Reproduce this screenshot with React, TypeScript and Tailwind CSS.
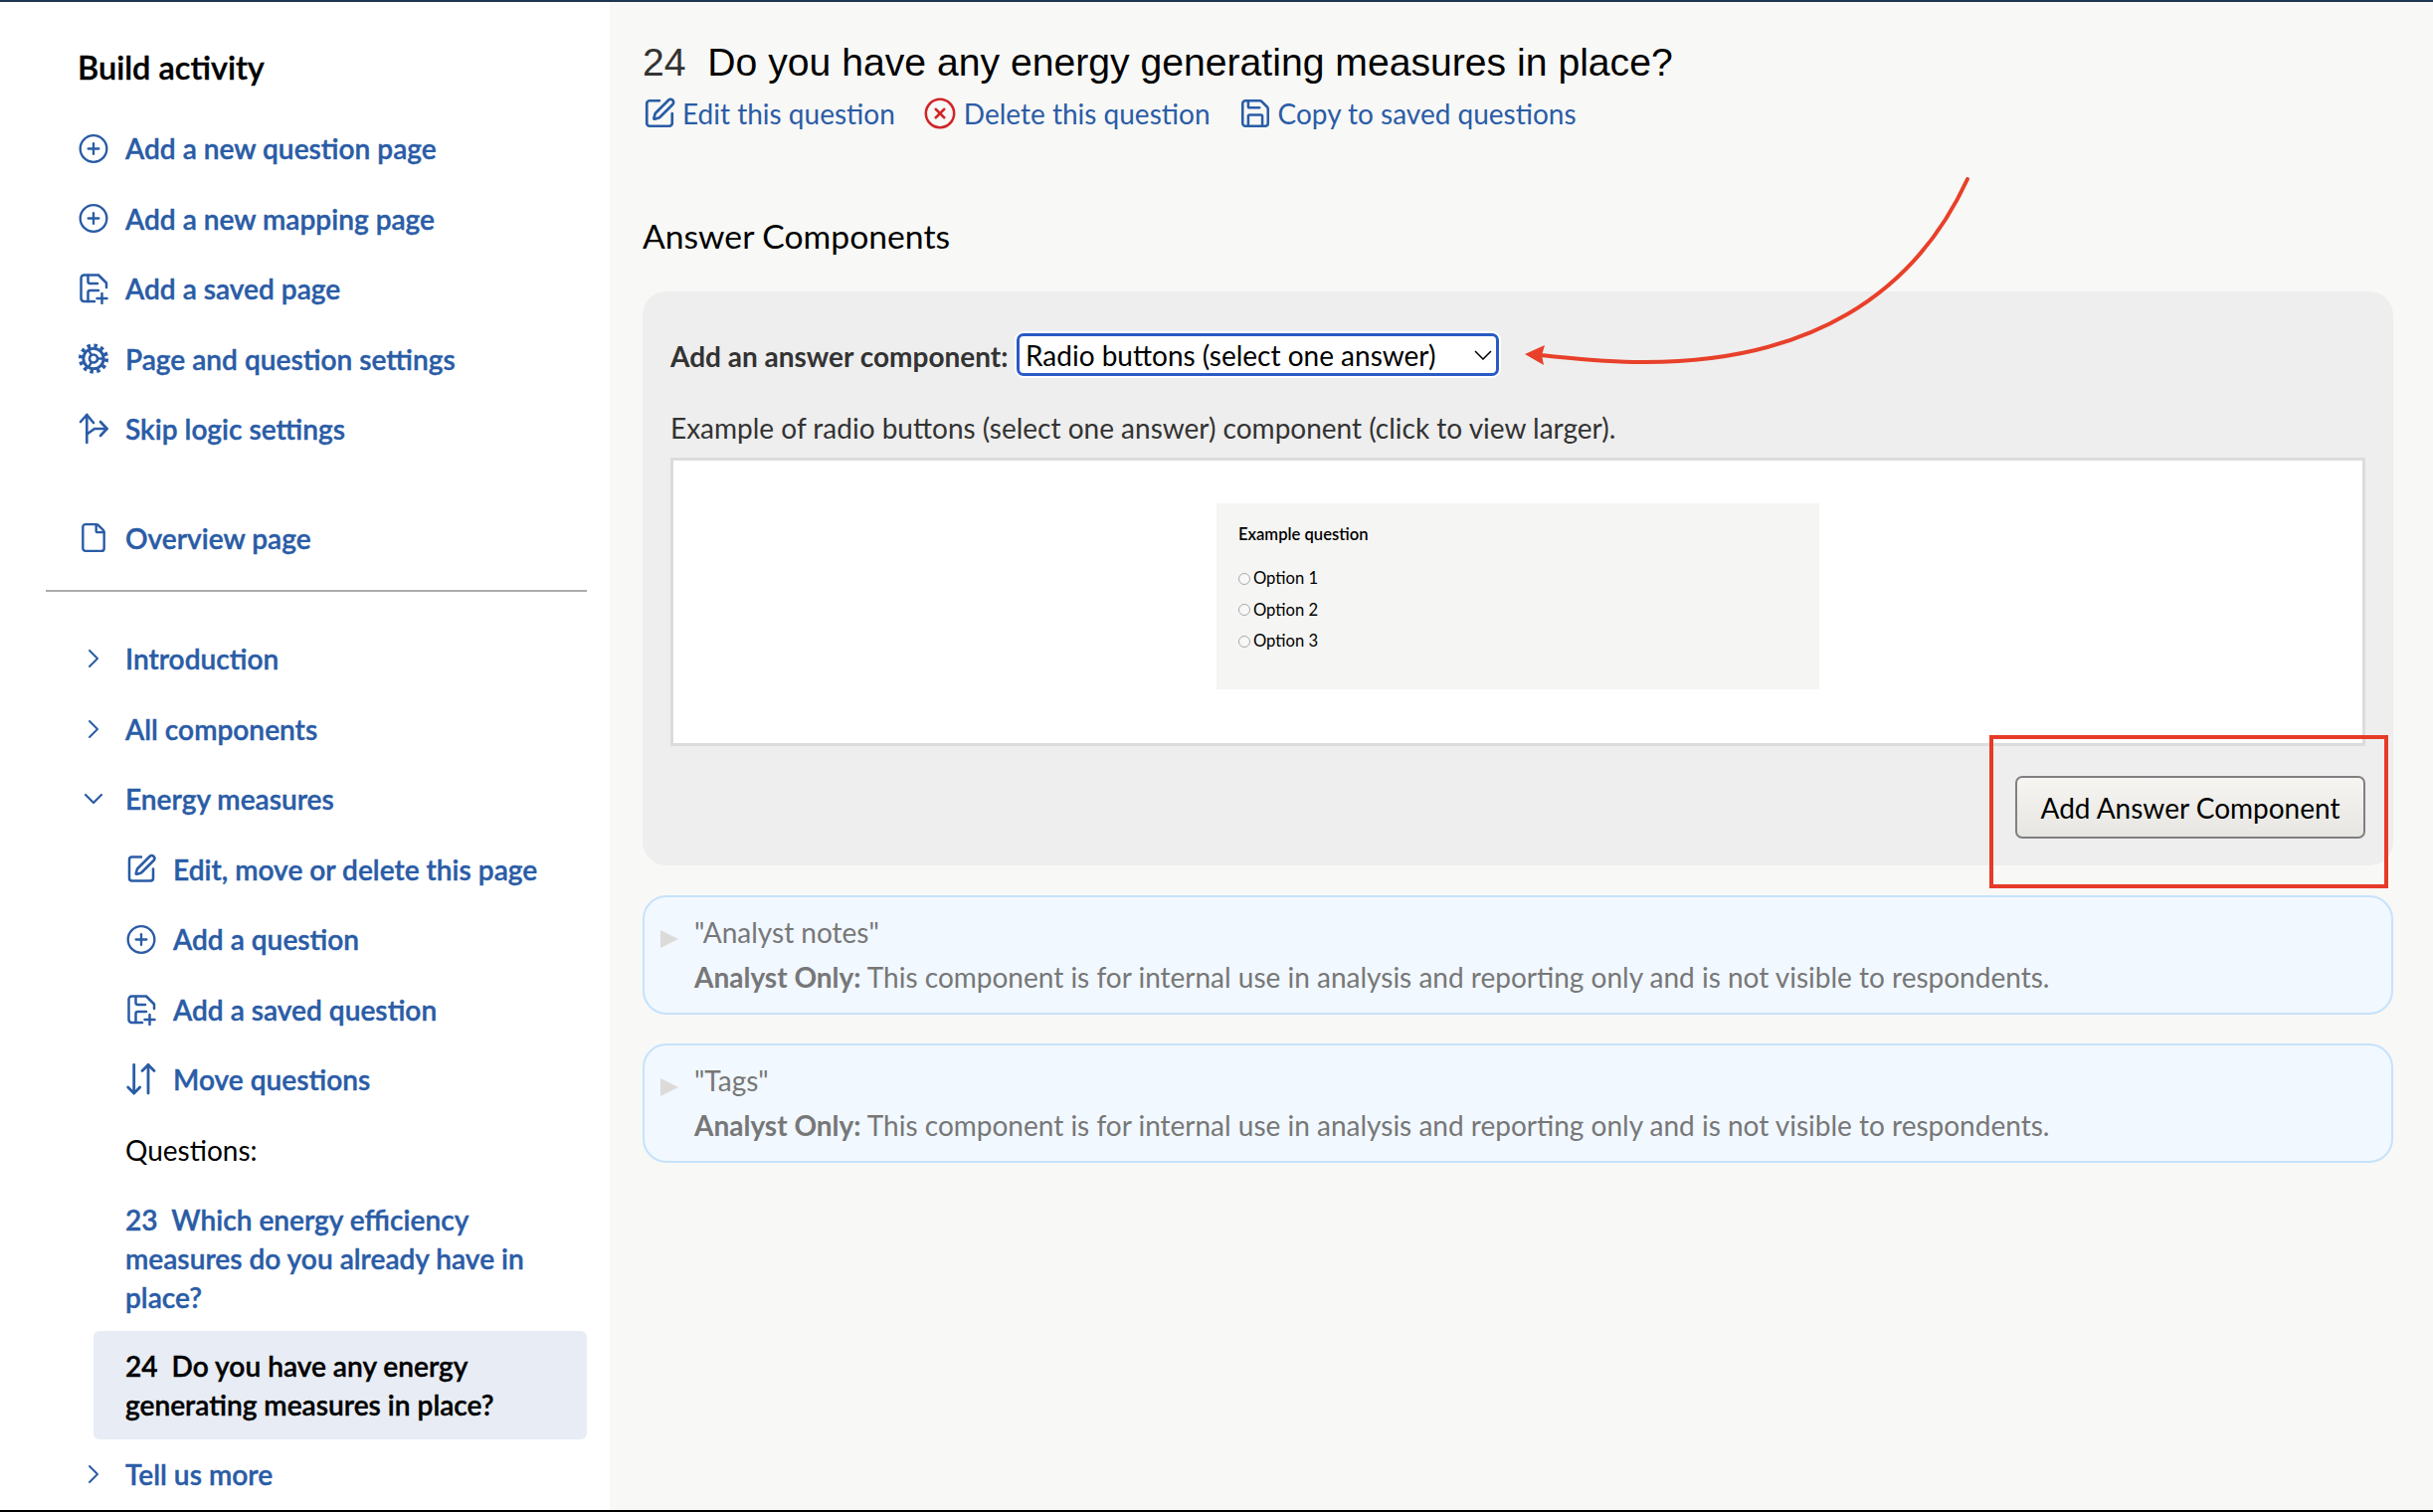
import { ChevronDown, ChevronRight, CirclePlus, CircleX, File, Save, SquarePen } from 'lucide-react'
import type { ReactNode } from 'react'

const LINK = 'text-[#2a5ca6]'

function SavedPlus() {
  return (
    <svg viewBox="0 0 32 32" fill="none" stroke="currentColor" strokeWidth="2.5" strokeLinecap="round" strokeLinejoin="round" className="h-[32px] w-[32px]">
      <path d="M17 29H6.5a3 3 0 0 1-3-3V5.5a3 3 0 0 1 3-3H21l8 8V15" />
      <path d="M10.5 3v6a2 2 0 0 0 2 2H20" />
      <path d="M10.5 29V20a2 2 0 0 1 2-2H21" />
      <path d="M24.5 21v10M19.5 26h10" />
    </svg>
  )
}

function Gear() {
  return (
    <svg viewBox="0 0 24 24" fill="none" stroke="currentColor" strokeLinecap="butt" className="h-[33px] w-[33px]">
      <circle cx="12" cy="12" r="7.6" strokeWidth="2.2" />
      <circle cx="12" cy="12" r="9.8" strokeWidth="3" strokeDasharray="2.6 2.53" />
      <circle cx="12" cy="12" r="3" strokeWidth="2" />
      <path d="M15 12h4M10.5 9.4 8.3 5.6M10.5 14.6l-2.2 3.8" strokeWidth="1.8" />
    </svg>
  )
}

function SkipLogic() {
  return (
    <svg viewBox="0 0 32 32" fill="none" stroke="currentColor" strokeWidth="2.6" strokeLinecap="round" strokeLinejoin="round" className="h-[32px] w-[32px]">
      <path d="M9.3 30V2" />
      <path d="M3 9l6.3-7L16 10" />
      <path d="M10 21l7-5h12.5" />
      <path d="M23 9l6.5 7L23 23" />
    </svg>
  )
}

function MoveArrows() {
  return (
    <svg viewBox="0 0 32 32" fill="none" stroke="currentColor" strokeWidth="2.8" strokeLinecap="round" strokeLinejoin="round" className="h-[32px] w-[32px]">
      <path d="M8.7 1.5V30" />
      <path d="M2.7 24l6 6 6-6" />
      <path d="M23 30V1.5" />
      <path d="M17 7.5l6-6 6 6" />
    </svg>
  )
}

function NavRow({ icon, label, indent }: { icon: ReactNode; label: string; indent?: boolean }) {
  return (
    <a className={`flex h-[70.5px] items-center ${LINK} ${indent ? 'pl-[126px]' : 'pl-[78px]'}`}>
      <span className="flex w-[32px] shrink-0 justify-center">{icon}</span>
      <span className="ml-[16px] text-[28.1px] font-semibold whitespace-nowrap [-webkit-text-stroke:0.4px]">{label}</span>
    </a>
  )
}

function AnalystCard({ title }: { title: string }) {
  return (
    <div className="flex h-[120px] rounded-[24px] border-2 border-[#c6e2fb] bg-[#f1f8ff] pl-[16px] text-[#777]">
      <div className="mt-[33px] h-0 w-0 border-y-[9px] border-l-[18px] border-y-transparent border-l-[#dcdbd9]" />
      <div className="ml-[16px] pt-[13px] text-[28px] leading-[45px]">
        <div>{title}</div>
        <div><span className="font-bold">Analyst Only:</span> This component is for internal use in analysis and reporting only and is not visible to respondents.</div>
      </div>
    </div>
  )
}

function ExampleOption({ label }: { label: string }) {
  return (
    <div className="flex h-[31.5px] items-center text-[16.6px]">
      <span className="h-[12px] w-[12px] rounded-full border border-[#aaaaaa] bg-[#f8f8f8]" />
      <span className="ml-[3px]">{label}</span>
    </div>
  )
}

export default function App() {
  return (
    <div className="relative flex h-[1520px] w-[2446px] overflow-hidden border-t-2 border-b-2 border-t-[#1f3550] border-b-black bg-white font-['Lato',sans-serif]">
      <aside className="w-[613px] shrink-0 bg-white">
        <h2 className="pt-[46px] pl-[78px] text-[32.5px] leading-[40px] font-semibold text-black [-webkit-text-stroke:0.4px]">Build activity</h2>
        <nav className="mt-[26px]">
          <NavRow icon={<CirclePlus size={33} strokeWidth={1.75} />} label="Add a new question page" />
          <NavRow icon={<CirclePlus size={33} strokeWidth={1.75} />} label="Add a new mapping page" />
          <NavRow icon={<SavedPlus />} label="Add a saved page" />
          <NavRow icon={<Gear />} label="Page and question settings" />
          <NavRow icon={<SkipLogic />} label="Skip logic settings" />
          <div className="mt-[39px]">
            <NavRow icon={<File size={33} strokeWidth={1.8} />} label="Overview page" />
          </div>
        </nav>
        <div className="mx-[46px] mt-[17px] mb-[32px] w-[544px] border-t-2 border-[#ababab]" />
        <nav>
          <NavRow icon={<ChevronRight size={40} strokeWidth={1.5} />} label="Introduction" />
          <NavRow icon={<ChevronRight size={40} strokeWidth={1.5} />} label="All components" />
          <NavRow icon={<ChevronDown size={36} strokeWidth={1.6} />} label="Energy measures" />
          <NavRow indent icon={<SquarePen size={33} strokeWidth={1.9} />} label="Edit, move or delete this page" />
          <NavRow indent icon={<CirclePlus size={33} strokeWidth={1.75} />} label="Add a question" />
          <NavRow indent icon={<SavedPlus />} label="Add a saved question" />
          <NavRow indent icon={<MoveArrows />} label="Move questions" />
          <div className="flex h-[70.5px] items-center pl-[126px] text-[28px] text-black">Questions:</div>
          <a className={`mt-[16px] block w-[590px] pl-[126px] text-[28.1px] leading-[39px] font-semibold [-webkit-text-stroke:0.4px] ${LINK}`}>
            23&nbsp; Which energy efficiency measures do you already have in place?
          </a>
          <div className="mt-[14px] ml-[94px] h-[109px] w-[496px] rounded-[6px] bg-[#e8ecf4] pt-[16px] pl-[32px] text-[28.1px] leading-[39px] font-semibold text-black [-webkit-text-stroke:0.4px]">
            24&nbsp; Do you have any energy generating measures in place?
          </div>
          <NavRow icon={<ChevronRight size={40} strokeWidth={1.5} />} label="Tell us more" />
        </nav>
      </aside>

      <main className="flex-1 bg-[#f8f8f6] pt-[38px] pr-[40px] pl-[33px]">
        <h1 className="text-[39.15px] leading-[46px] text-black font-['Liberation_Sans',sans-serif]">
          <span className="text-[#333]">24</span>&nbsp; Do you have any energy generating measures in place?
        </h1>
        <div className={`mt-[6px] flex h-[44px] items-center text-[28px] ${LINK}`}>
          <SquarePen size={34} strokeWidth={1.9} />
          <span className="ml-[6px]">Edit this question</span>
          <CircleX size={34} strokeWidth={1.8} className="ml-[28px] text-[#d0262a]" />
          <span className="ml-[7px]">Delete this question</span>
          <Save size={34} strokeWidth={1.8} className="ml-[28px]" />
          <span className="ml-[6px]">Copy to saved questions</span>
        </div>
        <h2 className="mt-[79px] text-[33.7px] leading-[44px] text-black">Answer Components</h2>
        <section className="mt-[34px] h-[577px] rounded-[24px] bg-[#eeeeee] px-[28px] pt-[42px]">
          <div className="flex h-[43px] items-center">
            <label className="w-[348px] pt-[2px] text-[28px] font-bold whitespace-nowrap text-[#333]">Add an answer component:</label>
            <div className="flex h-[43px] w-[485px] items-center justify-between rounded-[7px] border-[3.5px] border-[#2a5bc4] bg-white pr-[4px] pl-[6px] text-[28px] whitespace-nowrap text-black shadow-[0_0_0_2px_#ffffff]">
              <span>Radio buttons (select one answer)</span>
              <svg viewBox="0 0 18 10" fill="none" stroke="currentColor" strokeWidth="1.5" className="h-[10px] w-[18px]">
                <path d="M1 1l8 8 8-8" />
              </svg>
            </div>
          </div>
          <p className="mt-[30px] text-[28px] leading-[44px] text-[#333]">Example of radio buttons (select one answer) component (click to view larger).</p>
          <div className="mt-[8px] flex h-[290px] justify-center border-[3px] border-[#dcdcdc] bg-white pt-[43px]">
            <div className="h-[187px] w-[606px] bg-[#f5f5f3] pt-[19px] pl-[22px] text-black">
              <div className="text-[16.6px] leading-[24px] font-semibold">Example question</div>
              <div className="mt-[17px]">
                <ExampleOption label="Option 1" />
                <ExampleOption label="Option 2" />
                <ExampleOption label="Option 3" />
              </div>
            </div>
          </div>
          <div className="mt-[30px] flex justify-end">
            <button className="h-[63px] w-[352px] rounded-[7px] border-2 border-[#808080] bg-gradient-to-b from-[#f6f5f2] to-[#e7e6e2] text-[28px] text-black">Add Answer Component</button>
          </div>
        </section>
        <div className="mt-[30px]"><AnalystCard title={'"Analyst notes"'} /></div>
        <div className="mt-[29px]"><AnalystCard title={'"Tags"'} /></div>
      </main>

      {/* Annotations drawn on top of the screenshot */}
      <div className="absolute top-[737px] left-[2000px] h-[154px] w-[401px] border-4 border-[#e63b28]" />
      <svg className="pointer-events-none absolute top-[-2px] left-0" width="2446" height="1520" fill="none">
        <path d="M1978 180C1925 295 1820 365 1650 364C1615 364 1580 360 1548 357" stroke="#e8402a" strokeWidth="4" strokeLinecap="round" />
        <path d="M1533 356L1553 347L1550 357L1552 367Z" fill="#e8402a" />
      </svg>
    </div>
  )
}
